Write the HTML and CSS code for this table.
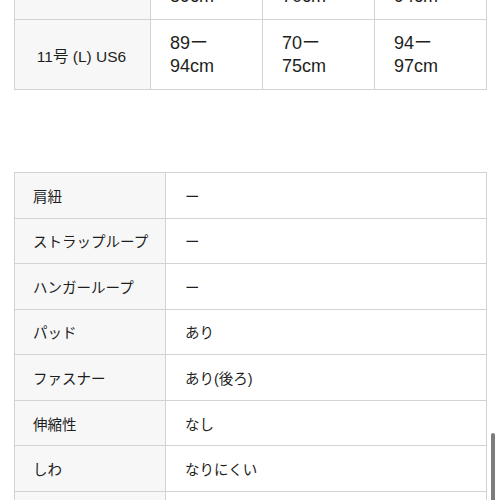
FILE: index.html
```html
<!DOCTYPE html>
<html lang="ja">
<head>
<meta charset="utf-8">
<title>サイズ表</title>
<link rel="stylesheet" href="styles.css">
</head>
<body>
<div class="page">
  <div class="size-table">
    <div class="cell head">9号 (M) US4</div>
    <div class="cell val">86ー<br>89cm</div>
    <div class="cell val">67ー<br>70cm</div>
    <div class="cell val">91ー<br>94cm</div>
    <div class="cell head">11号 (L) US6</div>
    <div class="cell val">89ー<br>94cm</div>
    <div class="cell val">70ー<br>75cm</div>
    <div class="cell val">94ー<br>97cm</div>
  </div>

  <div class="spec-table">
    <div class="cell label">肩紐</div><div class="cell value">ー</div>
    <div class="cell label">ストラップループ</div><div class="cell value">ー</div>
    <div class="cell label">ハンガーループ</div><div class="cell value">ー</div>
    <div class="cell label">パッド</div><div class="cell value">あり</div>
    <div class="cell label">ファスナー</div><div class="cell value">あり(後ろ)</div>
    <div class="cell label">伸縮性</div><div class="cell value">なし</div>
    <div class="cell label">しわ</div><div class="cell value">なりにくい</div>
    <div class="cell label">透け感</div><div class="cell value">なし</div>
  </div>
</div>
<div class="scrollbar"></div>
</body>
</html>
```

FILE: styles.css
```css
html, body {
  margin: 0;
  padding: 0;
  background: #ffffff;
  overflow: hidden;
  height: 500px;
}

body {
  font-family: "Liberation Sans", "Noto Sans CJK JP", sans-serif;
  color: #1e1e1e;
  position: relative;
}

.page {
  padding: 0 14px;
}

.size-table {
  margin-top: -51px;
  display: grid;
  grid-template-columns: 135px 111px 111px 111px;
  grid-auto-rows: 69px;
  gap: 1px;
  background: #d3d3d3;
  border: 1px solid #d3d3d3;
  width: max-content;
}

.size-table .cell {
  background: #ffffff;
  display: flex;
  align-items: center;
}

.size-table .head {
  background: #f7f7f7;
  justify-content: center;
  font-size: 15.5px;
  padding-right: 2px;
}

.size-table .val {
  font-size: 18px;
  line-height: 23px;
  padding-left: 19px;
}

.spec-table {
  margin-top: 82px;
  display: grid;
  grid-template-columns: 150px 320px;
  grid-auto-rows: 44.57px;
  gap: 1px;
  background: #d3d3d3;
  border: 1px solid #d3d3d3;
  width: max-content;
}

.spec-table .cell {
  display: flex;
  align-items: center;
  font-size: 14.5px;
  background: #ffffff;
}

.spec-table .label {
  background: #f7f7f7;
  padding-left: 18px;
}

.spec-table .value {
  padding-left: 19px;
}

.scrollbar {
  position: absolute;
  left: 491px;
  top: 433px;
  width: 4px;
  height: 80px;
  border-radius: 2px;
  background: #7c7c7c;
}
```
